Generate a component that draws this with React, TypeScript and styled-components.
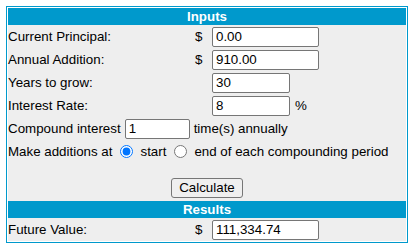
import React from "react";
import styled, { createGlobalStyle } from "styled-components";

const GlobalStyle = createGlobalStyle`
  html, body { margin: 0; padding: 0; background: #ffffff; }
  body {
    font-family: "Liberation Sans", Arial, sans-serif;
    font-size: 13.33px;
    color: #000000;
  }
`;

const Panel = styled.div`
  margin: 6px 0 0 6px;
  width: 402px;
  box-sizing: border-box;
  border: 1px solid #0099cc;
  padding: 1px;
  background: #ffffff;
`;

const Inner = styled.div`
  display: flex;
  flex-direction: column;
  background: #eeeeee;
`;

const SectionHeader = styled.div`
  height: 17px;
  line-height: 17px;
  background: #0099cc;
  color: #ffffff;
  font-weight: bold;
  font-size: 13.33px;
  text-align: center;
`;

const FieldRow = styled.div`
  display: grid;
  grid-template-columns: 187px 17px 1fr;
  align-items: center;
  height: 23px;
`;

const Label = styled.span`
  white-space: nowrap;
`;

const Currency = styled.span`
  text-align: left;
`;

const FieldCell = styled.div`
  grid-column: 3;
  display: flex;
  align-items: center;
  gap: 5px;
`;

const TextInput = styled.input<{ $width: number }>`
  width: ${(p) => p.$width}px;
  height: 20px;
  box-sizing: border-box;
  border: 1px solid #767676;
  border-radius: 2px;
  padding: 0 3px;
  margin: 0;
  background: #ffffff;
  color: #000000;
  font-family: "Liberation Sans", Arial, sans-serif;
  font-size: 13.33px;
  outline: none;
`;

const InlineRow = styled.div`
  display: flex;
  align-items: center;
  height: 23px;
  white-space: nowrap;
`;

const CompoundRow = styled(InlineRow)`
  gap: 4px;
`;

const Radio = styled.input`
  width: 13px;
  height: 13px;
  margin: 0 7px 0 8px;
  accent-color: #0075ff;
`;

const ButtonRow = styled.div`
  display: flex;
  justify-content: center;
  padding: 15px 0 3px;
`;

const Button = styled.button`
  height: 20px;
  box-sizing: border-box;
  padding: 0 7px;
  border: 1px solid #767676;
  border-radius: 3px;
  background: #efefef;
  color: #000000;
  font-family: "Liberation Sans", Arial, sans-serif;
  font-size: 13.33px;
  line-height: 18px;
`;

export default function App() {
  return (
    <>
      <GlobalStyle />
      <Panel>
        <Inner>
          <SectionHeader>Inputs</SectionHeader>
          <FieldRow>
            <Label>Current Principal:</Label>
            <Currency>$</Currency>
            <FieldCell>
              <TextInput $width={107} defaultValue="0.00" />
            </FieldCell>
          </FieldRow>
          <FieldRow>
            <Label>Annual Addition:</Label>
            <Currency>$</Currency>
            <FieldCell>
              <TextInput $width={107} defaultValue="910.00" />
            </FieldCell>
          </FieldRow>
          <FieldRow>
            <Label>Years to grow:</Label>
            <FieldCell>
              <TextInput $width={78} defaultValue="30" />
            </FieldCell>
          </FieldRow>
          <FieldRow>
            <Label>Interest Rate:</Label>
            <FieldCell>
              <TextInput $width={78} defaultValue="8" />
              <span>%</span>
            </FieldCell>
          </FieldRow>
          <CompoundRow>
            <span>Compound interest</span>
            <TextInput $width={65} defaultValue="1" />
            <span>time(s) annually</span>
          </CompoundRow>
          <InlineRow>
            <span>Make additions at</span>
            <Radio type="radio" name="when" defaultChecked />
            <span>start</span>
            <Radio type="radio" name="when" />
            <span>end of each compounding period</span>
          </InlineRow>
          <ButtonRow>
            <Button type="button">Calculate</Button>
          </ButtonRow>
          <SectionHeader>Results</SectionHeader>
          <FieldRow>
            <Label>Future Value:</Label>
            <Currency>$</Currency>
            <FieldCell>
              <TextInput $width={107} defaultValue="111,334.74" readOnly />
            </FieldCell>
          </FieldRow>
        </Inner>
      </Panel>
    </>
  );
}
